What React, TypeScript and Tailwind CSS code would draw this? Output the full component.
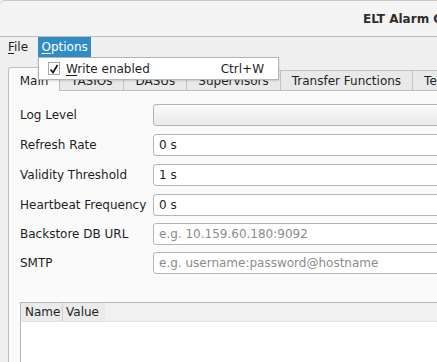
import React from "react";

const tabs = ["TASIOs", "DASUs", "Supervisors", "Transfer Functions", "Templates"];

const fields = [
  { label: "Refresh Rate", value: "0 s", top: "mt-[8px]" },
  { label: "Validity Threshold", value: "1 s", top: "mt-[8px]" },
  { label: "Heartbeat Frequency", value: "0 s", top: "mt-[8px]" },
  { label: "Backstore DB URL", placeholder: "e.g. 10.159.60.180:9092", top: "mt-[7px]" },
  { label: "SMTP", placeholder: "e.g. username:password@hostname", top: "mt-[7px]" },
];

const Row = ({ label, children, top }) => (
  <div className={`flex items-center h-[22px] ${top}`}>
    <span className="w-[133px] shrink-0 text-[#1f1f1f]">{label}</span>
    {children}
  </div>
);

const App = () => {
  return (
    <div
      className="relative w-[437px] h-[362px] overflow-hidden bg-[#efefef] text-[12px] leading-[14px] text-[#1f1f1f]"
      style={{ fontFamily: '"DejaVu Sans", sans-serif' }}
    >
      <div className="w-[620px]">
        {/* title bar */}
        <div className="h-[37px] flex items-center pl-[363px] bg-[#f4f4f4] border-t border-[#c8c8c8] border-b border-b-[#bcbcbc] rounded-tl-[5px]">
          <span className="font-bold text-[#2e2e2e] whitespace-nowrap">ELT Alarm Configuration</span>
        </div>

        {/* menu bar */}
        <div className="h-[20px] flex items-stretch">
          <div className="px-[8px] flex items-center">
            <span><span className="underline underline-offset-2">F</span>ile</span>
          </div>
          <div className="ml-[2px] w-[53px] flex items-center justify-center bg-[#308cc6] text-white">
            <span><span className="underline underline-offset-2">O</span>ptions</span>
          </div>
        </div>

        {/* tab widget */}
        <div className="ml-[8px] mt-[10px]">
          <div className="flex items-end h-[23px]">
            <div className="relative z-10 w-[52px] h-[24px] -mb-px flex items-center justify-center pt-[3px] bg-[#fafafa] border border-b-0 border-[#bdbdbd] rounded-t-[3px]">
              Main
            </div>
            {tabs.map((t) => (
              <div
                key={t}
                className="h-[20px] px-[11px] pt-[1px] flex items-center bg-[#e9e9e9] border-t border-r border-[#c3c3c3] whitespace-nowrap"
              >
                {t}
              </div>
            ))}
          </div>

          <div className="bg-[#fafafa] border-l border-t border-[#bdbdbd] pl-[11px] pt-[13px] h-[300px]">
            <Row label="Log Level" top="">
              <div className="flex-1 h-[22px] rounded-[3px] border border-[#b3b3b3] bg-gradient-to-b from-[#fafafa] to-[#e9e9e9]" />
            </Row>
            {fields.map((f) => (
              <Row key={f.label} label={f.label} top={f.top}>
                <div className="flex-1 h-[22px] rounded-[3px] border border-[#b5b5b5] bg-white flex items-center pl-[5px]">
                  {f.value ? (
                    <span>{f.value}</span>
                  ) : (
                    <span className="text-[#8c8c8c]">{f.placeholder}</span>
                  )}
                </div>
              </Row>
            ))}

            {/* properties table */}
            <div className="mt-[28px] border-l border-t border-[#b8b8b8] bg-white h-[80px]">
              <div className="flex h-[19px] bg-[#f1f1f1] border-b border-[#e2e2e2]">
                <div className="w-[42px] flex items-center pl-[4px] bg-[#ebebeb] border-r border-[#d0d0d0]">Name</div>
                <div className="w-[42px] flex items-center pl-[3px] bg-[#ebebeb]">Value</div>
              </div>
            </div>
          </div>
        </div>
      </div>

      {/* open Options menu */}
      <div className="absolute z-30 left-[38px] top-[57px] w-[241px] h-[23px] bg-white border border-[#b4b4b4] shadow-[0_1px_2px_rgba(0,0,0,0.15)] flex items-center">
        <div className="ml-[9px] shrink-0 w-[12px] h-[13px] border border-[#a8a8a8] bg-white flex items-center justify-center">
          <svg width="10" height="10" viewBox="0 0 10 10">
            <path d="M1.5 5.5 L4 8.5 L8.5 1" fill="none" stroke="#111" strokeWidth="1.6" />
          </svg>
        </div>
        <span className="ml-[6px] whitespace-nowrap">
          <span className="underline underline-offset-2">W</span>rite enabled
        </span>
        <span className="ml-auto mr-[14px] whitespace-nowrap">Ctrl+W</span>
      </div>
    </div>
  );
};

export default App;
